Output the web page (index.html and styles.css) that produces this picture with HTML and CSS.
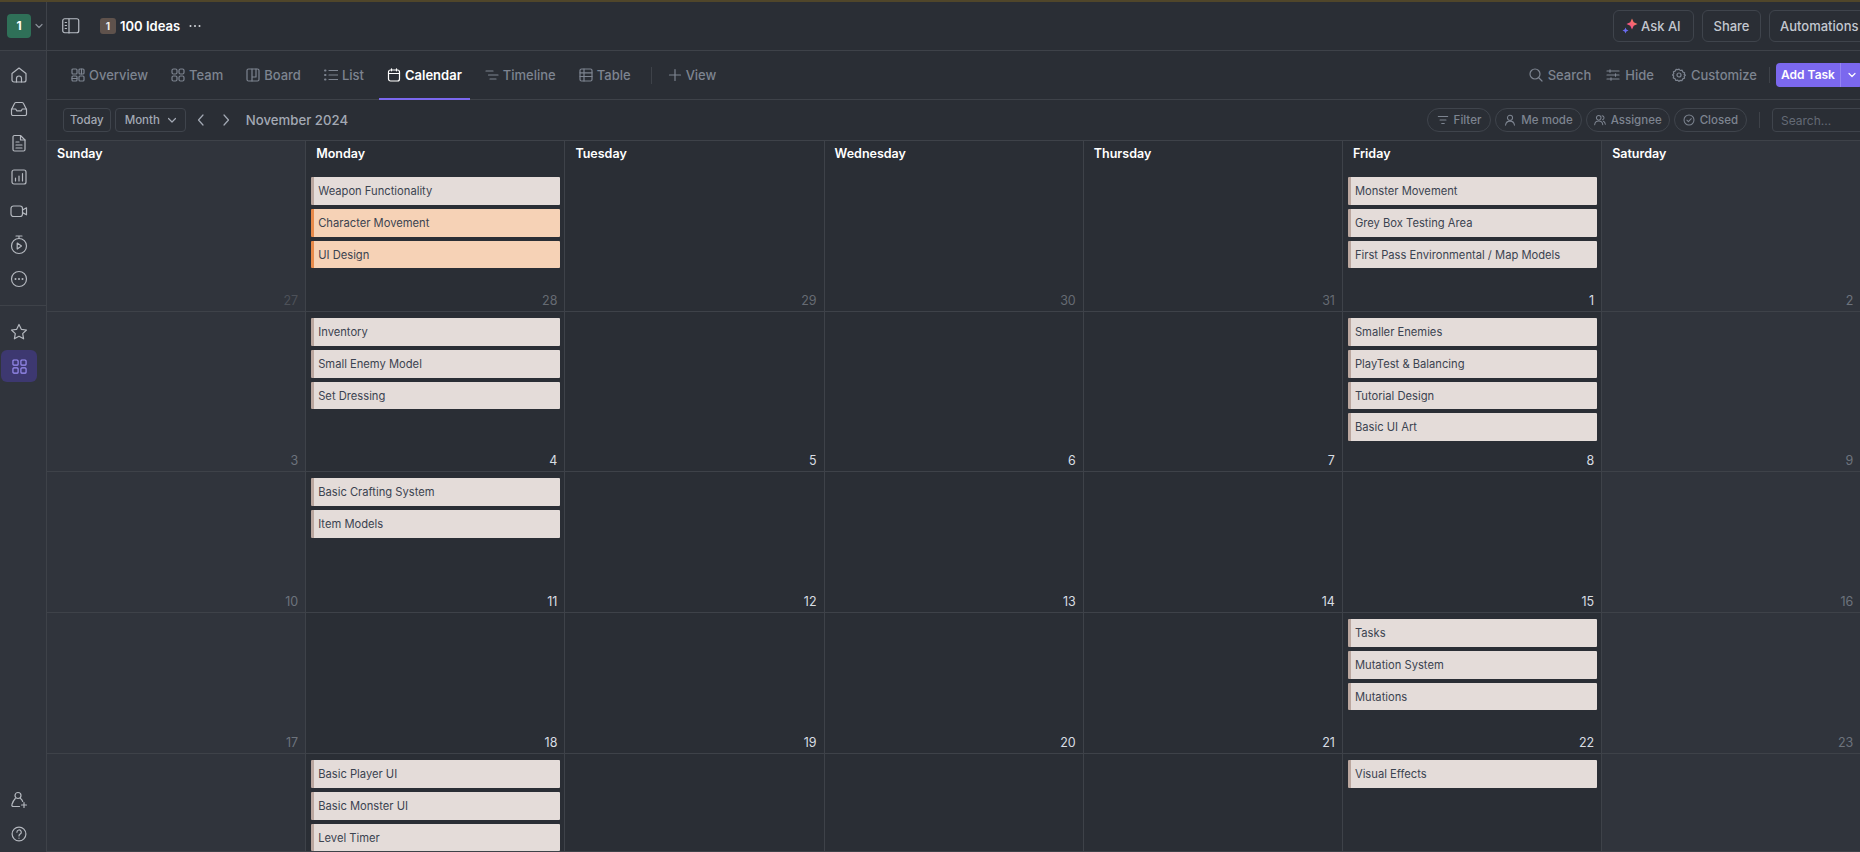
FILE: index.html
```html
<!DOCTYPE html>
<html lang="en">
<head>
<meta charset="UTF-8">
<meta name="viewport" content="width=device-width, initial-scale=1.0">
<title>100 Ideas - Calendar</title>
<link rel="stylesheet" href="styles.css">
</head>
<body>
<div class="strip"></div>
<header class="topbar">
    <div class="workspace">
        <span class="avatar">1</span>
        <svg class="ws-caret" viewBox="0 0 8 8"><path d="M1 2.500l3 3 3-3"/></svg>
    </div>
    <div class="crumbs">
        <svg class="panel-icon" viewBox="0 0 18 16"><rect x=".75" y=".75" width="16" height="14" rx="2"/><path d="M7 1v14M3.200 4.500h1.300M3.200 7.500h1.300M3.200 10.500h1.300"/></svg>
        <span class="badge">1</span>
        <span class="title">100 Ideas</span>
        <svg class="dots" viewBox="0 0 12 4"><circle cx="1.500" cy="2" r="1"/><circle cx="6" cy="2" r="1"/><circle cx="10.500" cy="2" r="1"/></svg>
    </div>
    <div class="top-actions">
        <button class="top-btn ask">
            <svg viewBox="0 0 16 16" class="spark">
                <defs><linearGradient id="spark-fill" x1="1" y1="0" x2="0" y2="1"><stop offset="0" stop-color="#fb8a4c"/><stop offset="1" stop-color="#f23d9c"/></linearGradient></defs>
                <path fill="url(#spark-fill)" d="M10 .5l1.700 3.800L15.500 6l-3.800 1.700L10 11.500 8.300 7.700 4.500 6l3.800-1.700z"/>
                <path class="s-blue" d="M3.500 9.500l.9 2.100 2.100.9-2.100.9-.9 2.100-.9-2.100-2.100-.9 2.100-.9z"/>
            </svg>
            <span>Ask AI</span>
        </button>
        <button class="top-btn share">Share</button>
        <button class="top-btn auto">Automations</button>
    </div>
</header>
<div class="body-row">
    <aside class="sidebar">
        <a class="side-item"><svg viewBox="0 0 18 18"><path d="M2 7.500L9 2l7 5.500V14a2 2 0 0 1-2 2H4a2 2 0 0 1-2-2z"/><path d="M6.500 16v-3.500a2.500 2.500 0 0 1 5 0V16"/></svg></a>
        <a class="side-item"><svg viewBox="0 0 18 18"><path d="M1.500 9.500L4.500 3.500a1.500 1.500 0 0 1 1.300-1h6.400a1.500 1.500 0 0 1 1.300 1l3 6V14a1.500 1.500 0 0 1-1.500 1.500H3A1.500 1.500 0 0 1 1.500 14z"/><path d="M1.500 9h4.200l1 1.800h4.600l1-1.800h4.200"/></svg></a>
        <a class="side-item"><svg viewBox="0 0 18 18"><path d="M3 3a1.500 1.500 0 0 1 1.500-1.500h6l4.500 4.500v9.500a1.500 1.500 0 0 1-1.500 1.500h-9A1.500 1.500 0 0 1 3 15.500z"/><path d="M10.500 1.500V6H15M6 8h3M6 11h6M6 14h6"/></svg></a>
        <a class="side-item"><svg viewBox="0 0 18 18"><rect x="2" y="2" width="14" height="14" rx="2"/><path d="M5.500 13v-3M9 13V8M12.500 13V5.500"/></svg></a>
        <a class="side-item"><svg viewBox="0 0 18 18"><rect x="1" y="4" width="11.500" height="10.500" rx="2.500"/><path d="M12.500 8l4-2.200v7l-4-2.200"/></svg></a>
        <a class="side-item"><svg class="tall" viewBox="0 0 18 20"><path d="M6 1h6M9 1v2.500"/><circle cx="9" cy="11" r="7.500"/><path d="M7.200 8l4.300 3-4.300 3z"/></svg></a>
        <a class="side-item"><svg viewBox="0 0 18 18"><circle cx="9" cy="9" r="7.500"/><path class="thick" d="M5.500 9h.01M9 9h.01M12.500 9h.01"/></svg></a>
        <div class="side-rule"></div>
        <a class="side-item"><svg viewBox="0 0 18 18"><path d="M9 1.500l2.300 4.800 5.200.7-3.800 3.600.9 5.200L9 13.300l-4.600 2.500.9-5.200L1.500 7l5.200-.7z"/></svg></a>
        <a class="side-item active"><svg viewBox="0 0 16 16"><rect x="1" y="1" width="5.500" height="5.500" rx="1"/><rect x="9.500" y="1" width="5.500" height="5.500" rx="1"/><rect x="1" y="9.500" width="5.500" height="5.500" rx="1"/><rect x="9.500" y="9.500" width="5.500" height="5.500" rx="1"/></svg></a>
        <div class="side-bottom">
            <a class="side-item"><svg viewBox="0 0 18 18"><circle cx="8" cy="4.500" r="3"/><path d="M10.500 7.500c1.200.8 1.800 2 2.200 3M9.500 15.500H3.500c-1.500 0-2-1-1.500-2.200.6-1.800 1.500-4 3.300-5.800"/><path d="M14 11.500v5M11.500 14h5"/></svg></a>
            <a class="side-item"><svg viewBox="0 0 18 18"><circle cx="9" cy="9" r="6.900"/><path d="M6.900 7.200a2.200 2.200 0 1 1 3.300 1.900c-.8.500-1.200 1-1.200 1.900M9 13v.2"/></svg></a>
        </div>
    </aside>
    <main class="main">
        <nav class="tabs">
            <a class="tab"><svg viewBox="0 0 14 14"><rect x="1" y="1" width="5" height="5" rx="1"/><rect x="8" y="1" width="5" height="5" rx="1"/><rect x="1" y="8" width="5" height="5" rx="1"/><rect x="8" y="8" width="5" height="5" rx="1"/><path d="M1 10.500h5M10.500 1v5"/></svg>Overview</a>
            <a class="tab"><svg viewBox="0 0 14 14"><rect x="1" y="1" width="5" height="5" rx="1.500"/><rect x="8" y="1" width="5" height="5" rx="1.500"/><rect x="1" y="8" width="5" height="5" rx="1.500"/><rect x="8" y="8" width="5" height="5" rx="1.500"/></svg>Team</a>
            <a class="tab"><svg viewBox="0 0 14 14"><rect x="1" y="1" width="12" height="12" rx="1.500"/><path d="M6 1v12M10 1v8H6"/></svg>Board</a>
            <a class="tab"><svg viewBox="0 0 14 14"><path d="M5 2.500h8.500M5 7h8.500M5 11.500h8.500"/><path class="thick" d="M1 2.500h.5M1 7h.5M1 11.500h.5"/></svg>List</a>
            <a class="tab on"><svg viewBox="0 0 14 14"><rect x="1.500" y="2" width="11" height="11" rx="2"/><path d="M1.500 5.500h11M4.500 .8v2M9.500 .8v2"/></svg>Calendar</a>
            <a class="tab"><svg viewBox="0 0 14 14"><path d="M1 3h7M3.500 7H13M5 11h6"/></svg>Timeline</a>
            <a class="tab"><svg viewBox="0 0 14 14"><rect x="1" y="1" width="12" height="12" rx="1.500"/><path d="M1 4.800h12M1 8.500h12M5 1v12"/></svg>Table</a>
            <span class="tab-rule"></span>
            <a class="tab view"><svg viewBox="0 0 14 14"><path d="M7 1.500v11M1.500 7h11"/></svg>View</a>
            <div class="tab-right">
                <a class="tool search"><svg viewBox="0 0 14 14"><circle cx="6" cy="6" r="5"/><path d="M10 10l3 3"/></svg>Search</a>
                <a class="tool"><svg viewBox="0 0 14 14"><path d="M1 3h12M1 7h12M1 11h12"/><path d="M4 1.800v2.400M9.500 5.800v2.400M5 9.800v2.400"/></svg>Hide</a>
                <a class="tool"><svg viewBox="0 0 14 14"><circle cx="7" cy="7" r="2"/><path d="M7 1l1.200 1.500 1.900-.3.700 1.800 1.800.8-.4 1.900L13.400 7l-1.200 1.300.3 1.900-1.800.7-.8 1.800-1.900-.4L7 13.400l-1.300-1.200-1.900.3-.7-1.800-1.800-.8.4-1.900L.6 7l1.200-1.300-.4-1.900 1.800-.7.800-1.700 1.900.3z"/></svg>Customize</a>
                <span class="add-rule"></span>
                <div class="add-task"><span class="add-main">Add Task</span><span class="add-caret"><svg viewBox="0 0 8 8"><path d="M1 2.500l3 3 3-3"/></svg></span></div>
            </div>
        </nav>
        <div class="toolbar">
            <button class="tb-btn">Today</button>
            <button class="tb-btn month">Month<svg viewBox="0 0 8 8"><path d="M.5 2.500L4 6l3.500-3.500"/></svg></button>
            <svg class="arrow first" viewBox="0 0 8 12"><path d="M6 1L1.500 6 6 11"/></svg>
            <svg class="arrow" viewBox="0 0 8 12"><path d="M2 1l4.500 5L2 11"/></svg>
            <span class="month-name">November 2024</span>
            <div class="filters">
                <span class="pill wide"><svg viewBox="0 0 14 14"><path d="M1.500 3h11M3.500 7h7M5.500 11h3"/></svg>Filter</span>
                <span class="pill"><svg viewBox="0 0 14 14"><circle cx="7" cy="4.500" r="3"/><path d="M1.800 13c.4-3 2.400-4.700 5.200-4.700s4.800 1.700 5.200 4.700"/></svg>Me mode</span>
                <span class="pill tight"><svg viewBox="0 0 14 14"><circle cx="5.500" cy="4.500" r="2.700"/><path d="M.8 12.500c.3-2.800 2-4.300 4.700-4.300s4.400 1.500 4.700 4.300M9.500 2c1.500.2 2.200 1.200 2.200 2.500 0 1-.6 2-1.700 2.300M11 8.500c1.300.5 2 1.800 2.200 3.500"/></svg>Assignee</span>
                <span class="pill"><svg viewBox="0 0 14 14"><circle cx="7" cy="7" r="5.800"/><path d="M4.500 7.200l1.800 1.800 3.400-3.500"/></svg>Closed</span>
                <span class="filter-rule"></span>
                <input class="search-box" placeholder="Search...">
            </div>
        </div>
        <section class="month-grid">
            <div class="cell weekend first-row"><b class="day">Sunday</b><span class="num faint">27</span></div>
            <div class="cell first-row"><b class="day">Monday</b><div class="events"><a class="ev">Weapon Functionality</a><a class="ev orange">Character Movement</a><a class="ev orange">UI Design</a></div><span class="num dim">28</span></div>
            <div class="cell first-row"><b class="day">Tuesday</b><span class="num dim">29</span></div>
            <div class="cell first-row"><b class="day">Wednesday</b><span class="num dim">30</span></div>
            <div class="cell first-row"><b class="day">Thursday</b><span class="num dim">31</span></div>
            <div class="cell first-row"><b class="day">Friday</b><div class="events"><a class="ev">Monster Movement</a><a class="ev">Grey Box Testing Area</a><a class="ev">First Pass Environmental / Map Models</a></div><span class="num">1</span></div>
            <div class="cell weekend first-row"><b class="day">Saturday</b><span class="num mid">2</span></div>

            <div class="cell weekend"><span class="num mid">3</span></div>
            <div class="cell"><div class="events"><a class="ev">Inventory</a><a class="ev">Small Enemy Model</a><a class="ev">Set Dressing</a></div><span class="num">4</span></div>
            <div class="cell"><span class="num">5</span></div>
            <div class="cell"><span class="num">6</span></div>
            <div class="cell"><span class="num">7</span></div>
            <div class="cell"><div class="events"><a class="ev">Smaller Enemies</a><a class="ev">PlayTest &amp; Balancing</a><a class="ev">Tutorial Design</a><a class="ev">Basic UI Art</a></div><span class="num">8</span></div>
            <div class="cell weekend"><span class="num mid">9</span></div>

            <div class="cell weekend"><span class="num mid">10</span></div>
            <div class="cell"><div class="events"><a class="ev">Basic Crafting System</a><a class="ev">Item Models</a></div><span class="num">11</span></div>
            <div class="cell"><span class="num">12</span></div>
            <div class="cell"><span class="num">13</span></div>
            <div class="cell"><span class="num">14</span></div>
            <div class="cell"><span class="num">15</span></div>
            <div class="cell weekend"><span class="num mid">16</span></div>

            <div class="cell weekend"><span class="num mid">17</span></div>
            <div class="cell"><span class="num">18</span></div>
            <div class="cell"><span class="num">19</span></div>
            <div class="cell"><span class="num">20</span></div>
            <div class="cell"><span class="num">21</span></div>
            <div class="cell"><div class="events"><a class="ev">Tasks</a><a class="ev">Mutation System</a><a class="ev">Mutations</a></div><span class="num">22</span></div>
            <div class="cell weekend"><span class="num mid">23</span></div>

            <div class="cell weekend"></div>
            <div class="cell"><div class="events"><a class="ev">Basic Player UI</a><a class="ev">Basic Monster UI</a><a class="ev">Level Timer</a></div></div>
            <div class="cell"></div>
            <div class="cell"></div>
            <div class="cell"></div>
            <div class="cell"><div class="events"><a class="ev">Visual Effects</a></div></div>
            <div class="cell weekend"></div>
        </section>
    </main>
</div>
</body>
</html>
```

FILE: styles.css
```css
* {
    box-sizing: border-box;
}
html, body {
    margin: 0;
    height: 852px;
    overflow: hidden;
    background: #2a2e35;
}
body {
    width: 1880px;
    font-family: Inter, "Liberation Sans", sans-serif;
    display: flex;
    flex-direction: column;
}
svg {
    fill: none;
    stroke: currentColor;
    stroke-width: 1.2;
    stroke-linecap: round;
    stroke-linejoin: round;
    flex: none;
}
.thick {
    stroke-width: 2;
}
.strip {
    height: 2px;
    background: #50462a;
    flex: none;
}

/* top bar */
.topbar {
    height: 49px;
    flex: none;
    display: flex;
    align-items: center;
    border-bottom: 1px solid #3e4249;
}
.workspace {
    width: 47px;
    height: 48px;
    flex: none;
    padding-left: 7px;
    display: flex;
    align-items: center;
    gap: 4px;
    border-right: 1px solid #3e4249;
    color: #8a9099;
}
.avatar {
    width: 24px;
    height: 24px;
    border-radius: 4px;
    background: #2f7058;
    color: #fff;
    font-size: 12px;
    font-weight: 700;
    line-height: 24px;
    text-align: center;
}
.ws-caret {
    width: 8px;
    height: 8px;
}
.crumbs {
    display: flex;
    align-items: center;
    padding-left: 15px;
    color: #b9bec6;
}
.panel-icon {
    width: 18px;
    height: 16px;
    margin-right: 20px;
}
.badge {
    width: 16px;
    height: 16px;
    border-radius: 3px;
    background: #5f524c;
    color: #f0eeec;
    font-size: 10px;
    font-weight: 700;
    line-height: 16px;
    text-align: center;
    margin-right: 4px;
}
.title {
    font-size: 13px;
    font-weight: 600;
    color: #fff;
    margin-right: 9px;
}
.dots {
    width: 12px;
    height: 4px;
    fill: #d5d8dd;
    stroke: none;
}
.top-actions {
    margin-left: auto;
    display: flex;
    gap: 8px;
}
.top-btn {
    height: 32px;
    padding: 0 10px;
    background: none;
    border: 1px solid #3f444c;
    border-radius: 6px;
    color: #c3c8d0;
    font: 500 13px Inter, "Liberation Sans", sans-serif;
    white-space: nowrap;
    display: flex;
    align-items: center;
    justify-content: center;
    gap: 3px;
}
.top-btn.ask {
    width: 81px;
    padding: 0 0 0 8px;
    justify-content: flex-start;
}
.top-btn.share {
    width: 59px;
}
.top-btn.auto {
    width: 111px;
    justify-content: flex-start;
}
.spark {
    width: 16px;
    height: 16px;
    stroke: none;
}
.s-blue {
    fill: #6a6cf0;
}

/* sidebar */
.body-row {
    flex: 1;
    display: flex;
    min-height: 0;
}
.sidebar {
    width: 47px;
    flex: none;
    padding-top: 7px;
    display: flex;
    flex-direction: column;
    align-items: flex-start;
    background: #30343c;
    border-right: 1px solid #3e4249;
    color: #b4b8bf;
}
.side-item {
    width: 36px;
    height: 34px;
    flex: none;
    display: flex;
    align-items: center;
    justify-content: center;
    margin-left: 1px;
}
.side-item svg {
    width: 18px;
    height: 18px;
}
.side-item svg.tall {
    height: 20px;
}
.side-rule {
    width: 46px;
    height: 1px;
    flex: none;
    background: #3e4249;
    margin: 9px 0 9px;
}
.side-item.active {
    height: 32px;
    margin-top: 1px;
    border-radius: 6px;
    background: #3d3870;
    color: #9d90f7;
}
.side-item.active svg {
    width: 15px;
    height: 15px;
}
.side-bottom {
    margin-top: auto;
    padding-bottom: 1px;
}

/* tab row */
.main {
    flex: 1;
    min-width: 0;
    display: flex;
    flex-direction: column;
}
.tabs {
    height: 49px;
    flex: none;
    padding-left: 16px;
    padding-right: 17px;
    display: flex;
    align-items: stretch;
    gap: 7px;
    border-bottom: 1px solid #3e4249;
}
.tab {
    padding: 0 8px;
    display: flex;
    align-items: center;
    gap: 4px;
    font-size: 13px;
    font-weight: 500;
    color: #7d8490;
    border-bottom: 2px solid transparent;
    margin-bottom: -1px;
}
.tab svg, .tool svg {
    width: 14px;
    height: 14px;
}
.tab.on {
    color: #fff;
    font-weight: 600;
    border-bottom-color: #7b68ee;
}
.tab-rule {
    width: 1px;
    height: 17px;
    align-self: center;
    margin: 0 1px 0 5px;
    background: #3e4249;
}
.tab-right {
    margin-left: auto;
    display: flex;
    align-items: center;
    gap: 18px;
}
.tool {
    display: flex;
    align-items: center;
    gap: 5px;
    font-size: 13px;
    font-weight: 500;
    color: #7d8490;
}
.tool.search {
    margin-right: -3px;
}
.add-rule {
    width: 1px;
    height: 16px;
    background: #3e4249;
    margin: 0 -12px 0 -6px;
}
.add-task {
    height: 24px;
    display: flex;
    border-radius: 4px;
    background: #7b68ee;
    color: #fff;
    font-size: 12px;
    font-weight: 600;
    line-height: 24px;
}
.add-main {
    width: 65px;
    text-align: center;
    border-right: 1px solid #9484f2;
}
.add-caret {
    width: 22px;
    display: flex;
    align-items: center;
    padding-left: 7px;
}
.add-caret svg {
    width: 8px;
    height: 8px;
}

/* toolbar */
.toolbar {
    height: 41px;
    flex: none;
    padding-left: 16px;
    display: flex;
    align-items: center;
    border-bottom: 1px solid #3e4249;
}
.tb-btn {
    height: 24px;
    padding: 0 6px;
    margin-right: 4px;
    background: none;
    border: 1px solid #3f444c;
    border-radius: 4px;
    color: #a3a9b4;
    font: 500 11.500px Inter, "Liberation Sans", sans-serif;
    display: flex;
    align-items: center;
    gap: 8px;
}
.tb-btn.month {
    padding: 0 9px;
}
.tb-btn svg {
    width: 8px;
    height: 8px;
}
.arrow {
    width: 8px;
    height: 12px;
    margin-left: 17px;
    color: #a3a9b4;
}
.arrow.first {
    margin-left: 7px;
}
.month-name {
    margin-left: 16px;
    font-size: 13.200px;
    font-weight: 500;
    color: #a3a9b4;
}
.filters {
    margin-left: auto;
    display: flex;
    align-items: center;
    gap: 4px;
}
.pill {
    height: 24px;
    padding: 0 8px;
    border: 1px solid #3f444c;
    border-radius: 12px;
    display: flex;
    align-items: center;
    gap: 5px;
    font-size: 11.500px;
    font-weight: 500;
    color: #7d8490;
}
.pill.wide {
    padding: 0 9px;
}
.pill.tight {
    padding: 0 7px;
}
.pill svg {
    width: 12px;
    height: 12px;
}
.filter-rule {
    width: 1px;
    height: 16px;
    background: #3e4249;
    margin: 0 8px;
}
.search-box {
    width: 108px;
    height: 24px;
    padding: 0 8px;
    background: none;
    border: 1px solid #3f444c;
    border-radius: 4px;
    color: #7d8490;
    font: 12px Inter, "Liberation Sans", sans-serif;
}
.search-box::placeholder {
    color: #646a75;
}

/* calendar */
.month-grid {
    flex: 1;
    display: grid;
    grid-template-columns: repeat(7, 259.2px);
    grid-template-rows: 171px 160px 141px 141px 98px;
    min-height: 0;
    overflow: hidden;
}
.cell {
    padding: 6px 4px 2px 5px;
    display: flex;
    flex-direction: column;
    border-right: 1px solid #3e4249;
    border-bottom: 1px solid #3e4249;
    min-width: 0;
}
.cell.first-row {
    padding-top: 0;
}
.cell.weekend {
    background: #30343c;
}
.day {
    height: 36px;
    flex: none;
    padding-left: 5px;
    font-size: 12.500px;
    font-weight: 600;
    line-height: 26px;
    color: #fff;
}
.events {
    display: flex;
    flex-direction: column;
    gap: 4px;
}
.ev {
    height: 27.800px;
    flex: none;
    padding-left: 4px;
    background: #e4dcd9;
    border-left: 3px solid #bba79f;
    border-radius: 1px;
    font-size: 11.200px;
    line-height: 28.500px;
    color: #3b4350;
    white-space: nowrap;
}
.ev.orange {
    background: #f6d2b6;
    border-left-color: #e88a4a;
}
.num {
    margin-top: auto;
    padding-right: 3px;
    font-size: 12.500px;
    line-height: 16px;
    text-align: right;
    color: #d8dde3;
}
.num.dim {
    color: #666b73;
}
.num.mid {
    color: #6d737c;
}
.num.faint {
    color: #4d5159;
}
```
